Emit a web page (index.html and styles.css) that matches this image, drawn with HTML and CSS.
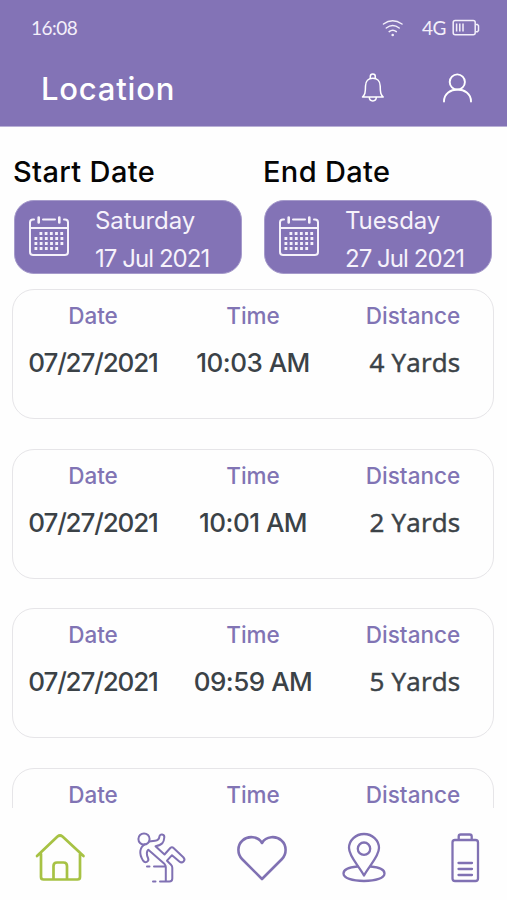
FILE: index.html
```html
<!DOCTYPE html>
<html lang="en">
<head>
<meta charset="utf-8">
<title>Location</title>
<link rel="stylesheet" href="styles.css">
</head>
<body>
<svg width="0" height="0" class="defs">
  <symbol id="calendar" viewBox="28 214 42 44">
    <g fill="none" stroke="#f6f2fb" stroke-width="2" stroke-linecap="round" stroke-linejoin="round">
      <path d="M34 219.5h-1a3 3 0 0 0-3 3v29.500a3 3 0 0 0 3 3h32a3 3 0 0 0 3-3v-29.500a3 3 0 0 0-3-3h-1M43 219.500h12M30 228h38"/>
      <path stroke-width="2.600" d="M38.700 217.500v5M59.300 217.500v5"/>
      <path stroke-width="2.800" stroke-linecap="butt" stroke-dasharray="2.800 2.400" d="M39.500 233.500h24M34.500 238.500h29M34.500 243.500h29M34.500 248.500h24"/>
    </g>
  </symbol>
</svg>
<div class="app">
  <header class="header">
    <div class="status">
      <span class="clock">16:08</span>
      <svg class="wifi" width="22" height="18" viewBox="382 18 22 18" fill="none" stroke="#f3effa" stroke-width="1.500" stroke-linecap="round"><path d="M383.500 23q9-6.600 18.500 0M386.300 27q6.400-5 12.900 0M389.200 30.600q3.600-2.800 7.100 0"/><circle cx="392.700" cy="34" r="1.300" fill="#f3effa" stroke="none"/></svg>
      <span class="network">4G</span>
      <svg width="28" height="17" viewBox="452 19 28 17" fill="none" stroke="#f3effa" stroke-width="1.500"><rect x="453.200" y="20.500" width="22" height="14.300" rx="2"/><path d="M475.500 24.500h2l1 1.200v4.800l-1 1.200h-2M456.600 23.500v8M459.800 23.500v8M463 23.500v8"/></svg>
    </div>
    <div class="titlebar">
      <h1>Location</h1>
      <svg class="bell" width="24" height="30" viewBox="361 73 24 30" fill="none" stroke="#fff" stroke-width="1.500" stroke-linejoin="round"><path d="M370.300 78.400v-1.900a2.500 2.500 0 0 1 5 0v1.900M362.500 97c2.400-2.500 3-4 3-11 0-5 3-7.800 7.300-7.800s7.400 2.800 7.400 7.800c0 7 .6 8.500 3 11zM369.300 97c0 5.200 7 5.200 7 0"/></svg>
      <svg width="32" height="32" viewBox="441 72 32 32" fill="none" stroke="#fff" stroke-width="1.900" stroke-linecap="round"><circle cx="457.300" cy="82" r="7.600"/><path d="M444 101.500c0-16 27-16 27 0"/></svg>
    </div>
  </header>
  <main class="content">
    <section class="dates">
      <div class="date-field">
        <h2 class="start-label">Start Date</h2>
        <button class="picker"><svg width="42" height="44"><use href="#calendar"/></svg><span class="picked"><span class="weekday">Saturday</span><span class="day day-a">17 Jul 2021</span></span></button>
      </div>
      <div class="date-field">
        <h2 class="end-label">End Date</h2>
        <button class="picker"><svg width="42" height="44"><use href="#calendar"/></svg><span class="picked"><span class="weekday">Tuesday</span><span class="day">27 Jul 2021</span></span></button>
      </div>
    </section>
    <section class="records">
      <article class="card"><dl><dt>Date</dt><dd class="num">07/27/2021</dd></dl><dl><dt>Time</dt><dd class="time">10:03 AM</dd></dl><dl><dt>Distance</dt><dd class="yards">4 Yards</dd></dl></article>
      <article class="card"><dl><dt>Date</dt><dd class="num">07/27/2021</dd></dl><dl><dt>Time</dt><dd class="time">10:01 AM</dd></dl><dl><dt>Distance</dt><dd class="yards">2 Yards</dd></dl></article>
      <article class="card"><dl><dt>Date</dt><dd class="num">07/27/2021</dd></dl><dl><dt>Time</dt><dd class="time">09:59 AM</dd></dl><dl><dt>Distance</dt><dd class="yards">5 Yards</dd></dl></article>
      <article class="card"><dl><dt>Date</dt></dl><dl><dt>Time</dt></dl><dl><dt>Distance</dt></dl></article>
    </section>
  </main>
  <nav class="tabs">
    <a class="active"><svg width="52" height="52" viewBox="34 832 52 52"><path d="M37 856l20.500-19.500q2.500-2 5 0L83.500 856M41 854v23q0 2.500 2.500 2.500h34q2.500 0 2.500-2.500v-23M53.500 879v-13q0-3.500 3.500-3.500h6.500q3.500 0 3.500 3.500v13"/></svg></a>
    <a><svg width="52" height="52" viewBox="135 832 52 52"><g stroke-width="2"><circle cx="144" cy="839" r="5.600"/><path d="M149 841.600l6-.8q4-.5 4.300-3.600c.3-4 5.400-3 5 .3-.4 5-2 7.500-8.800 8.700l9 8.300 5.800-6.500q1.700-1.500 3.500.2l9.500 9c3 3.200-1 6.800-4 4.200l-7.300-6.200-5 5.500 4 4q1.300 1.300 1.300 3v10.800q0 3-3 3h-3.500V867q0-1.700-1.200-2.900L148.300 849.800c-2 2-1.800 5-.2 8.400 1.300 3.700-3 5.300-5 2.500-4.500-7-3.500-13.500 2-16.500M147 866.500h2.500M154 866.500h11M153 881.500h2.500M160 881.500h8"/></g></svg></a>
    <a><svg width="52" height="52" viewBox="236.500 832 52 52"><path stroke-width="2.600" d="M262.500 879L242.500 859c-5-5-4.700-14 .5-18.500 5.500-5 15.500-4.500 19.500 2.500 4-7 14-7.500 19.500-2.500 5.200 4.500 5.500 13.500.5 18.500z"/></svg></a>
    <a><svg width="52" height="52" viewBox="338 832 52 52"><g stroke-width="2.300"><path d="M364 875.500c-5-9.500-15-19-15-27.500a15 14 0 0 1 30 0c0 8.500-10 18-15 27.500z"/><circle cx="364" cy="848.700" r="6.200"/><path d="M357.500 866.500c-8.500.7-14 3.200-14 7 0 4.500 8.500 7.500 20.500 7.500s20.500-3 20.500-7.500c0-3.800-5.500-6.300-14-7"/></g></svg></a>
    <a><svg width="52" height="52" viewBox="439 832 52 52"><path stroke-width="2.300" d="M458.700 840v-3.500q0-2 2-2h9q2 0 2 2v3.500M455 840h20.500q2.500 0 2.500 2.500v36q0 2.500-2.500 2.500H455q-2.500 0-2.500-2.500v-36q0-2.500 2.500-2.500zM458.500 863h13.500M458.500 869h13.500M458.500 875h13.500"/></svg></a>
  </nav>
</div>
</body>
</html>
```
FILE: styles.css
```css
* { box-sizing: border-box; margin: 0; padding: 0; }
body { background: #fefefe; font-family: Inter, "Open Sans", sans-serif; }
.defs { display: block; }
.app { height: 900px; display: flex; flex-direction: column; overflow: hidden; }
.header { height: 127px; flex: none; background: #8373b6; border-bottom: 1px solid #b9b0d6; color: #fff; }
.status { height: 55px; padding: 0 27px 0 31px; display: flex; align-items: center; font: 19px/24px Lato, sans-serif; color: #f3effa; }
.clock { flex: 1; letter-spacing: -.5px; }
.wifi { margin-right: 18px; }
.network { width: 30px; letter-spacing: -.5px; }
.titlebar { height: 66px; padding: 0 34px 0 41px; display: flex; align-items: center; }
h1 { flex: 1; font-size: 31px; line-height: 40px; font-weight: 500; letter-spacing: .8px; padding-top: 2px; }
.bell { margin-right: 56px; }
.content { flex: 1; min-height: 0; overflow: hidden; }
.dates { display: flex; gap: 22px; padding: 21px 0 0 14px; }
.date-field { width: 228px; }
h2 { height: 52px; line-height: 47px; font-size: 29px; font-weight: 500; color: #050505; white-space: nowrap; letter-spacing: .35px; margin-left: -1px; }
.picker { width: 228px; height: 74px; display: flex; padding: 13px 0 0 13px; border: 1px solid #a69bcb; border-radius: 20px; background: #8373b6; color: #f6f2fb; font: 24px/38px Inter, sans-serif; text-align: left; }
.picked { margin: -12px 0 0 25px; display: flex; flex-direction: column; white-space: nowrap; }
.weekday { letter-spacing: -.1px; }
.day { letter-spacing: -.95px; }
.records { padding: 15px 13px 0 12px; display: flex; flex-direction: column; gap: 29.500px; }
.card { height: 130px; flex: none; display: flex; border: 1.500px solid #e6e5e8; border-radius: 22px; background: #fefefe; }
dl { flex: 1; text-align: center; white-space: nowrap; }
dt { margin-top: 10px; font-size: 22.500px; line-height: 32px; font-weight: 450; color: #8174b4; }
dd { margin-top: 13px; font-size: 26px; line-height: 36px; font-weight: 450; color: #3b4247; }
.num { letter-spacing: -1.150px; }
.time { letter-spacing: -.5px; }
.yards { margin-top: 12px; font-family: "Open Sans", sans-serif; font-weight: 400; -webkit-text-stroke: .5px currentColor; letter-spacing: .2px; padding-left: 4px; }
.tabs { height: 92px; flex: none; display: flex; padding: 7px 0 0 9.500px; background: #fefefe; }
.tabs a { width: 101.200px; flex: none; display: flex; align-items: center; justify-content: center; color: #8071b3; }
.tabs svg { fill: none; stroke: currentColor; stroke-width: 2.700px; stroke-linecap: round; stroke-linejoin: round; }
.tabs .active { color: #a7c244; }
```
